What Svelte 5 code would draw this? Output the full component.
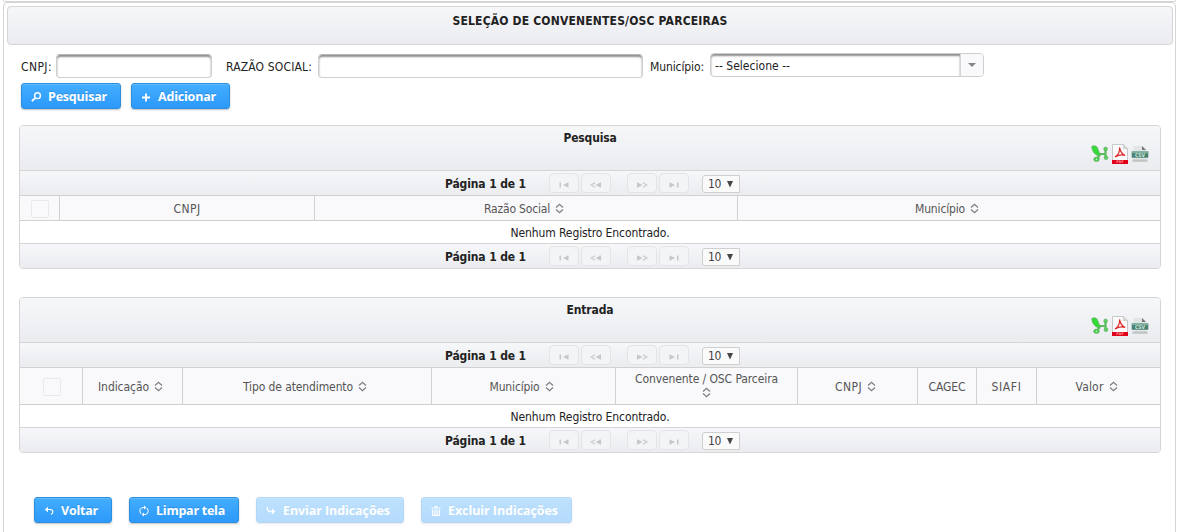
<script>
  // Adjusts tracking so that a label takes the given width in pixels.
  function fit(node, width) {
    const natural = node.getBoundingClientRect().width;
    node.style.letterSpacing = `${(width - natural) / node.textContent.length}px`;
  }

  const tables = [
    {
      id: 'pesquisa',
      title: 'Pesquisa',
      titleWidth: 53,
      columns: [
        { text: 'CNPJ', width: 27 },
        { text: 'Razão Social', width: 66, sort: true },
        { text: 'Município', width: 50, sort: true }
      ]
    },
    {
      id: 'entrada',
      title: 'Entrada',
      titleWidth: 47,
      columns: [
        { text: 'Indicação', width: 51, sort: true },
        { text: 'Tipo de atendimento', width: 110, sort: true },
        { text: 'Município', width: 50, sort: true },
        { text: 'Convenente / OSC Parceira', width: 143, sort: true, stacked: true },
        { text: 'CNPJ', width: 27, sort: true },
        { text: 'CAGEC', width: 37 },
        { text: 'SIAFI', width: 30 },
        { text: 'Valor', width: 28, sort: true }
      ]
    }
  ];
</script>

{#snippet label(text, width)}<span class="t" use:fit={width}>{text}</span>{/snippet}

{#snippet icon(name)}
  <svg class="icon" width="16" height="16" viewBox="0 0 16 16" fill="none" stroke="currentColor" stroke-width="1.6">
    {#if name === 'search'}
      <circle cx="9.5" cy="6.7" r="2.9" stroke-width="1.4" /><path d="M7.300 9 3.800 12.200" stroke-width="1.800" />
    {:else if name === 'plus'}
      <path d="M8 4.500v8M4 8.500h8" stroke-width="1.800" />
    {:else if name === 'back'}
      <path d="M6 6.500h3.200c1.800 0 2.600 1 2.600 2.300 0 1.200-.6 2-1.600 2.700" stroke-width="1.200" /><path d="M3.800 6.500 7 3.800v5.400z" fill="currentColor" stroke="none" />
    {:else if name === 'refresh'}
      <path d="M8.500 4.500H7C4.500 4.500 3.500 7 4 9l1.200 2M7.500 11.500H9c2.500 0 3.500-2.500 3-4.500l-1.200-2" stroke-width="1" /><path d="M8 2.400v4.200l2.300-2.100zM8 9.400v4.200l-2.300-2.100z" fill="currentColor" stroke="none" />
    {:else if name === 'forward'}
      <path d="M4.500 3.800c-.5 3 .6 4.700 2.700 4.700H10" stroke-width="1.400" /><path d="M9 5.600v5.800l3.400-2.900z" fill="currentColor" stroke="none" />
    {:else if name === 'trash'}
      <path d="M3.500 5h9M6.500 3.700h3" stroke-width="1.200" /><path d="M4.700 6.500v6h6.600v-6M7 6.500v6M9 6.500v6" stroke-width="1.200" />
    {/if}
  </svg>
{/snippet}

{#snippet button(name, text, width, disabled)}
  <button class={['btn', name]} {disabled}>{@render icon(name)}{@render label(text, width)}</button>
{/snippet}

{#snippet sorter()}
  <svg class="sorter" width="16" height="12" viewBox="0 0 16 12" fill="none" stroke="#808080" stroke-width="1.3">
    <path d="M4 4.500 7.500 1.300 11 4.500M4 6.500l3.500 3.200L11 6.500" />
  </svg>
{/snippet}

{#snippet paginator()}
  <div class="paginator">
    <b class="page">{@render label('Página 1 de 1', 81)}</b>
    {#each ['first', 'prev', 'next', 'last'] as kind}
      <span class={['nav', kind]}>
        <svg width="12" height="8" viewBox="0 0 12 8" fill="#c6c7c9" stroke="#c6c7c9" stroke-width="0">
          {#if kind === 'first'}
            <path d="M1.500 1.500H3v5H1.500zM10.500 1.200v5.600L5 4z" />
          {:else if kind === 'prev'}
            <path d="M11 1.200v5.600L5.500 4z" /><path d="M5 1.800 1 4l4 2.200" fill="none" stroke-width="1.100" />
          {:else if kind === 'next'}
            <path d="M1 1.200v5.600L6.500 4z" /><path d="M7 1.800 11 4 7 6.200" fill="none" stroke-width="1.100" />
          {:else}
            <path d="M1.500 1.200v5.600L7 4zM9 1.500h1.500v5H9z" />
          {/if}
        </svg>
      </span>
    {/each}
    <span class="rows">
      {@render label('10', 13)}
      <svg width="8" height="8" viewBox="0 0 8 8"><path d="M1 1h6L4 7.500z" fill="#444" /></svg>
    </span>
  </div>
{/snippet}

{#snippet exports()}
  <div class="exports">
    <svg width="18" height="20" viewBox="0 0 18 20">
      <path d="M9 10.500 6 15.200M8 10h7M14.500 4.500v9.500" stroke="#58bb5c" stroke-width="2.200" fill="none" />
      <path d="M.8 2.500c2.500-1.500 5-.5 5.800 1.700L9 10.500l-2 1.200C3.500 10.500.8 6.500.8 2.500z" fill="#31dc35" stroke="#6ba66d" stroke-width=".7" />
      <ellipse cx="5.500" cy="15.300" rx="2.800" ry="2.200" fill="#42cf47" stroke="#6ba66d" stroke-width=".6" />
      <circle cx="14.600" cy="5" r="1.900" fill="#55d65a" stroke="#6ba66d" stroke-width=".6" />
      <circle cx="15" cy="13.700" r="1.900" fill="#55d65a" stroke="#6ba66d" stroke-width=".6" />
      <circle cx="5.500" cy="15.300" r=".9" fill="#b6f5b8" />
    </svg>
    <svg width="16" height="20" viewBox="0 0 16 20">
      <path d="M.5.5h10.800l4.200 4.200v14.800H.5z" fill="#fbfbfb" stroke="#bcbcbc" stroke-width=".8" />
      <path d="M11.300.5v4.200h4.200z" fill="#ddd" stroke="#bbb" stroke-width=".5" />
      <path d="M3 13c3-2 5-6 4.500-9.500 1 4.500 3 7 5.700 8-3-1.300-6.300-.8-10.200 1.500z" fill="none" stroke="#e02a2a" stroke-width="1.200" />
      <path d="M0 16h16v4H0z" fill="#e00019" />
      <text x="8" y="19.300" text-anchor="middle" font-size="3.600" font-weight="700" fill="#ff9c9c">PDF</text>
    </svg>
    <svg width="18" height="20" viewBox="0 0 18 20">
      <path d="M2.500 2h9l4 4v12h-13z" fill="#e2e5e5" />
      <path d="M11 2v4h4z" fill="#777" />
      <path d="M1.500 15.500h15v2.200h-15z" fill="#bfc4c3" />
      <path d="M.7 7.500h16.600v6.300H.7z" fill="#488170" />
      <path d="M.7 7.500h16.600v1.700H.7z" fill="#7fae9f" />
      <text x="9" y="12.800" text-anchor="middle" font-size="5" font-weight="700" fill="#cfe4dc">CSV</text>
    </svg>
  </div>
{/snippet}

<div class="previous"></div>
<main class="panel">
  <header class="bar">{@render label('SELEÇÃO DE CONVENENTES/OSC PARCEIRAS', 275)}</header>

  <div class="filters">
    <label for="cnpj">{@render label('CNPJ:', 31)}</label>
    <input id="cnpj" class="cnpj" />
    <label for="razao">{@render label('RAZÃO SOCIAL:', 86)}</label>
    <input id="razao" class="razao" />
    <span class="caption">{@render label('Município:', 54)}</span>
    <div class="select">
      <span class="value">{@render label('-- Selecione --', 75)}</span>
      <span class="arrow"><svg width="8" height="4" viewBox="0 0 8 4"><path d="M0 0h8L4 4z" fill="#858585" /></svg></span>
    </div>
  </div>

  <div class="actions">
    {@render button('search', 'Pesquisar', 59, false)}
    {@render button('plus', 'Adicionar', 58, false)}
  </div>

  {#each tables as table}
    <section class={['table', table.id]}>
      <div class="caption-bar">
        {@render label(table.title, table.titleWidth)}
        {@render exports()}
      </div>
      {@render paginator()}
      <div class="head">
        <div class="cell"><span class="check"></span></div>
        {#each table.columns as column}
          <div class={['cell', column.stacked && 'stacked']}>
            {@render label(column.text, column.width)}
            {#if column.sort}{@render sorter()}{/if}
          </div>
        {/each}
      </div>
      <div class="empty">{@render label('Nenhum Registro Encontrado.', 159)}</div>
      {@render paginator()}
    </section>
  {/each}

  <footer>
    {@render button('back', 'Voltar', 37, false)}
    {@render button('refresh', 'Limpar tela', 69, false)}
    {@render button('forward', 'Enviar Indicações', 107, true)}
    {@render button('trash', 'Excluir Indicações', 110, true)}
  </footer>
</main>

<style>
  :global(body) {
    background: #fff;
    overflow: hidden;
  }
  :global(#app) {
    font: 12px/16px "DejaVu Sans Condensed", "DejaVu Sans", sans-serif;
    font-stretch: condensed;
    color: #222;
  }
  .t {
    display: inline-block;
    white-space: nowrap;
    flex: none;
  }
  .previous {
    box-sizing: border-box;
    height: 2px;
    margin: 0 3px 0 3px;
    border: solid #d5d5d5;
    border-width: 0 1px 1px;
    border-radius: 0 0 4px 4px;
  }
  .panel {
    box-sizing: border-box;
    width: 1173px;
    height: 540px;
    margin-left: 3px;
    padding: 3px;
    border: 1px solid #d5d5d5;
    border-radius: 4px;
  }
  .bar, .caption-bar, .paginator {
    background: linear-gradient(#f6f7f9, #ebecf0);
  }
  .bar {
    box-sizing: border-box;
    width: 1166px;
    height: 39px;
    padding-top: 6px;
    border: 1px solid #d5d5d5;
    border-radius: 4px;
    text-align: center;
    font-weight: 700;
  }
  .filters {
    display: flex;
    height: 26px;
    margin: 8px 0 0 14px;
  }
  .filters label, .caption {
    padding-top: 6px;
  }
  input {
    box-sizing: border-box;
    height: 24px;
    margin: 1px 0 0;
    padding: 0 4px;
    border: 1px solid #cfcfcf;
    border-top-color: #b5b5b5;
    border-radius: 4px;
    box-shadow: inset 0 2px 2px #8f8f8f;
    font: inherit;
  }
  .cnpj {
    width: 156px;
    margin: 1px 14px 0 4px;
  }
  .razao {
    width: 325px;
    margin: 1px 7px 0 6px;
  }
  .select {
    display: flex;
    box-sizing: border-box;
    width: 274px;
    height: 24px;
    margin-left: 6px;
    border: 1px solid #cfcfcf;
    border-radius: 4px;
    overflow: hidden;
  }
  .value {
    flex: 1;
    padding: 4px 0 0 4px;
    border-radius: 3px 0 0 3px;
    box-shadow: inset 0 2px 2px #8f8f8f;
  }
  .arrow {
    display: flex;
    align-items: center;
    justify-content: center;
    width: 22px;
    border-left: 1px solid #d5d5d5;
    background: #f9f9fb;
  }
  .actions {
    display: flex;
    gap: 10px;
    margin: 4px 0 16px 14px;
  }
  .btn {
    display: flex;
    align-items: center;
    box-sizing: border-box;
    height: 26px;
    margin: 0;
    padding: 2px 0 0 6px;
    gap: 4px;
    border: 1px solid #2b8fe0;
    border-radius: 3px;
    background: linear-gradient(#43adff, #2d99fa);
    box-shadow: inset 0 1px #63baff, 0 1px 2px rgba(0, 0, 0, .25);
    color: #fff;
    font: 700 12.5px/16px "Open Sans", sans-serif;
    text-shadow: 0 -1px rgba(0, 60, 130, .2);
  }
  .btn .icon {
    flex: none;
    margin-top: -1px;
  }
  .search { width: 100px; }
  .plus { width: 99px; }
  .back { width: 78px; }
  .refresh { width: 110px; }
  .forward { width: 148px; }
  .trash { width: 151px; }
  .btn:disabled {
    opacity: .35;
  }
  .table {
    box-sizing: border-box;
    width: 1142px;
    margin-left: 12px;
    border: 1px solid #d5d5d5;
    border-radius: 4px;
    overflow: hidden;
  }
  .entrada {
    margin-top: 28px;
  }
  .caption-bar {
    position: relative;
    height: 44px;
    border-bottom: 1px solid #d5d5d5;
    text-align: center;
    font-weight: 700;
  }
  .caption-bar > .t {
    margin-top: 4px;
  }
  .exports {
    position: absolute;
    top: 18px;
    right: 11px;
    display: flex;
    gap: 3px;
  }
  .paginator {
    display: flex;
    align-items: flex-start;
    height: 24px;
    padding-left: 425px;
  }
  .page {
    width: 104px;
    padding-top: 5px;
  }
  .nav {
    display: flex;
    align-items: center;
    justify-content: center;
    box-sizing: border-box;
    width: 30px;
    height: 20px;
    margin: 2px 2px 0 0;
    padding-top: 3px;
    border: 1px solid #e3e4e7;
    border-radius: 4px;
    background: #f3f4f6;
  }
  .prev { margin-right: 16px; }
  .last { margin-right: 13px; }
  .rows {
    display: flex;
    align-items: center;
    justify-content: space-between;
    box-sizing: border-box;
    width: 38px;
    height: 18px;
    margin-top: 4px;
    padding: 0 5px 1px 5px;
    border: 1px solid #cfcfcf;
    border-radius: 3px 0 0 3px;
    background: #fafafb;
    color: #444;
  }
  .head {
    display: grid;
    height: 24px;
    border: solid #d1d1d1;
    border-width: 1px 0;
    background: #f9f9fb;
    color: #555;
  }
  .pesquisa .head {
    grid-template-columns: 40px 255px 423px 1fr;
  }
  .entrada .head {
    grid-template-columns: 63px 100px 249px 184px 182px 120px 59px 60px 1fr;
    height: 36px;
  }
  .cell {
    display: flex;
    align-items: center;
    justify-content: center;
    gap: 2px;
    padding-top: 1px;
    border-right: 1px solid #d1d1d1;
  }
  .cell:last-child {
    border-right: 0;
  }
  .cell.stacked {
    flex-direction: column;
    gap: 0;
    padding-bottom: 3px;
  }
  .check {
    box-sizing: border-box;
    width: 18px;
    height: 18px;
    border: 1px solid #e9e9eb;
    border-radius: 2px;
    margin-left: 1px;
  }
  .empty {
    height: 22px;
    line-height: 24px;
    border-bottom: 1px solid #d5d5d5;
    text-align: center;
  }
  footer {
    display: flex;
    gap: 17px;
    margin: 44px 0 0 27px;
  }
</style>
